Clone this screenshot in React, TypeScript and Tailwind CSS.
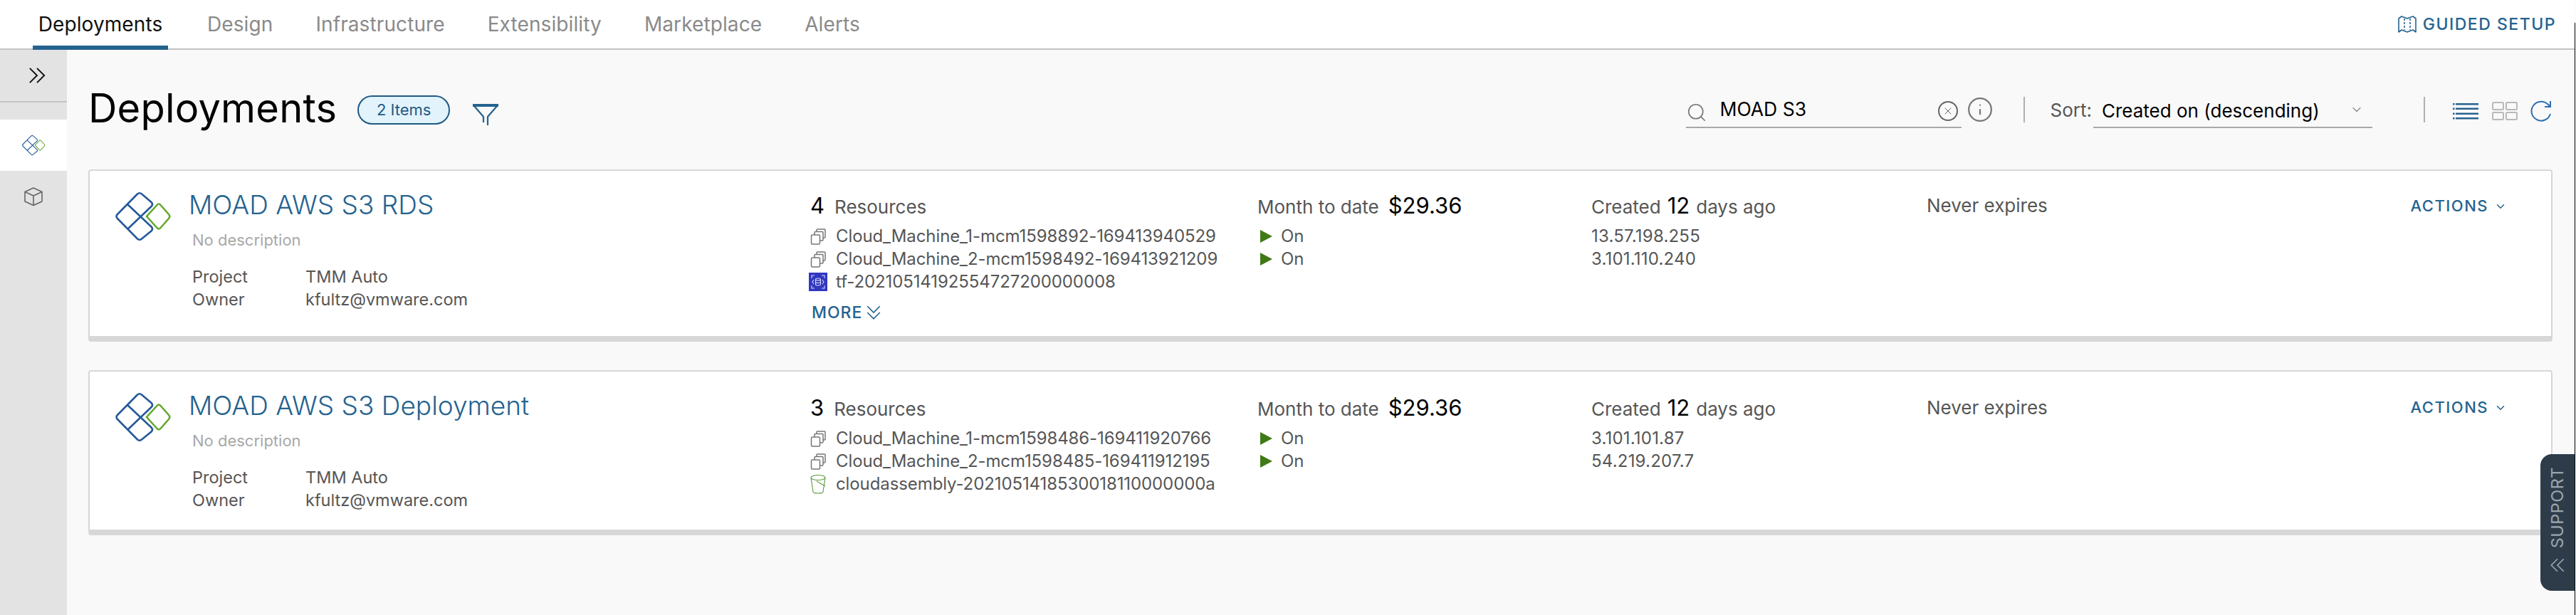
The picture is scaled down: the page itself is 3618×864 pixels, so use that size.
import { ChevronDown, Info, Search, X } from 'lucide-react';

const font = "font-['Inter','Liberation_Sans',sans-serif]";

// ─ Icons ───────────────────────────────────────
function DeployIcon({ className }: { className: string }) {
  return (
    <svg viewBox="-2 -2 81 72" fill="none" strokeWidth="2.6" className={className}>
      <path
        d="M31 2.5 Q34 0 37 2.5 L50.5 14 Q53.5 17 50.5 20 L17 52 M17 17 L50.5 48.5 Q53.5 51.5 50.5 54.5 L37 65.5 Q34 68 31 65.5 L3 37 Q0 34 3 31 L31 2.5"
        stroke="#25599c"
      />
      <path d="M58.5 18 Q61 15 63.5 18 L75 31 Q77.5 34 75 37 L63.5 50 Q61 53 58.5 50 L44 34 Z" stroke="#66a82e" />
    </svg>
  );
}

function CubeIcon() {
  return (
    <svg viewBox="0 0 28 28" fill="none" stroke="#666" strokeWidth="1.6" className="w-[28px] h-[28px]">
      <path d="M14 2 L26 7.5 V21 L14 26.5 L2 21 V7.5 Z M2 7.5 L14 13 L26 7.5 M14 13 V26.5" strokeLinejoin="round" />
    </svg>
  );
}

function DoubleChevron({ className, dir }: { className: string; dir: 'right' | 'down' | 'left' }) {
  const d =
    dir === 'right'
      ? 'M3 3 L11 11 L3 19 M11 3 L19 11 L11 19'
      : dir === 'down'
        ? 'M3 3 L11 11 L19 3 M3 11 L11 19 L19 11'
        : 'M11 3 L3 11 L11 19 M19 3 L11 11 L19 19';
  return (
    <svg viewBox="0 0 22 22" fill="none" stroke="currentColor" strokeWidth="1.5" className={className}>
      <path d={d} />
    </svg>
  );
}

function FilterIcon() {
  return (
    <svg viewBox="0 0 36 30" fill="none" stroke="#25638f" strokeWidth="2.2" className="w-[36px] h-[30px]">
      <path d="M0 2 H36" strokeWidth="4" />
      <path d="M2 3 L15 18 V26 M34 3 L21 18 V30" />
    </svg>
  );
}

function MachineIcon() {
  return (
    <svg viewBox="0 0 22 24" fill="none" stroke="#777" strokeWidth="1.5" className="w-[22px] h-[24px] shrink-0">
      <rect x="1.5" y="10" width="12" height="13" rx="1.5" />
      <path d="M6 10 V6.5 a1 1 0 0 1 1-1 H17 a1 1 0 0 1 1 1 V17 a1 1 0 0 1-1 1 H13.5" />
      <path d="M9 5.5 V3 a1 1 0 0 1 1-1 H20 a1 1 0 0 1 1 1 V13 a1 1 0 0 1-1 1 H18" />
    </svg>
  );
}

function ChipIcon() {
  return (
    <div className="w-[26px] h-[26px] bg-[#3237c0] flex items-center justify-center shrink-0 -ml-[2px] mr-[-2px]">
      <svg viewBox="0 0 22 22" fill="none" stroke="#d5d8f5" strokeWidth="1.1" className="w-[22px] h-[22px]">
        <path d="M2 6 V2 H6 M16 2 H20 V6 M2 16 V20 H6 M16 20 H20 V16" />
        <ellipse cx="11" cy="7.5" rx="3.5" ry="1.5" />
        <path d="M7.5 7.5 V14.5 a3.5 1.5 0 0 0 7 0 V7.5 M7.5 11 a3.5 1.5 0 0 0 7 0" />
        <path d="M5 8 L3 11 L5 14 M17 8 L19 11 L17 14" />
      </svg>
    </div>
  );
}

function BucketIcon() {
  return (
    <svg viewBox="0 0 24 28" fill="none" stroke="#5b9a3a" strokeWidth="1.1" className="w-[24px] h-[28px] shrink-0 -ml-[1px] -mr-[1px]">
      <ellipse cx="12" cy="5" rx="10" ry="3.5" />
      <path d="M2 5 L5 25 a7 2 0 0 0 14 0 L22 5 M10 10 L22 17" />
    </svg>
  );
}

function MapIcon() {
  return (
    <svg viewBox="0 0 28 26" fill="none" stroke="#25638f" strokeWidth="1.6" className="w-[28px] h-[26px]">
      <path d="M2 5 L6 2 L14 5 L22 2 L26 5 V24 L22 21 L14 24 L6 21 L2 24 Z" strokeLinejoin="round" />
      <path d="M10 5 V21 M18 5 V21" strokeDasharray="3 2" />
    </svg>
  );
}

function ListIcon() {
  return (
    <svg viewBox="0 0 36 24" className="w-[36px] h-[24px]" fill="#25638f">
      {[1, 7.5, 14.5, 21].map((y) => (
        <g key={y}>
          <rect x="0" y={y} width="2.5" height="2.5" />
          <rect x="4" y={y} width="32" height="2.5" />
        </g>
      ))}
    </svg>
  );
}

function GridIcon() {
  return (
    <svg viewBox="0 0 36 26" fill="none" stroke="#b9b9b9" strokeWidth="2" className="w-[36px] h-[26px]">
      <rect x="1" y="1" width="15" height="10" rx="1.5" />
      <rect x="20" y="1" width="15" height="10" rx="1.5" />
      <rect x="1" y="15" width="15" height="10" rx="1.5" />
      <rect x="20" y="15" width="15" height="10" rx="1.5" />
    </svg>
  );
}

function RefreshIcon() {
  return (
    <svg viewBox="0 0 32 30" fill="none" stroke="#2e6fae" strokeWidth="2" className="w-[32px] h-[30px]">
      <path d="M29 19 A13.5 13.5 0 1 1 26 6 L29 9 M29 1 V9 H21" />
    </svg>
  );
}

// ─ Data ────────────────────────────────────────
type Resource = { name: string; kind: 'machine' | 'chip' | 'bucket' };

type Deployment = {
  title: string;
  count: number;
  resources: Resource[];
  ips: string[];
  more?: boolean;
};

const deployments: Deployment[] = [
  {
    title: 'MOAD AWS S3 RDS',
    count: 4,
    resources: [
      { name: 'Cloud_Machine_1-mcm1598892-169413940529', kind: 'machine' },
      { name: 'Cloud_Machine_2-mcm1598492-169413921209', kind: 'machine' },
      { name: 'tf-20210514192554727200000008', kind: 'chip' },
    ],
    ips: ['13.57.198.255', '3.101.110.240'],
    more: true,
  },
  {
    title: 'MOAD AWS S3 Deployment',
    count: 3,
    resources: [
      { name: 'Cloud_Machine_1-mcm1598486-169411920766', kind: 'machine' },
      { name: 'Cloud_Machine_2-mcm1598485-169411912195', kind: 'machine' },
      { name: 'cloudassembly-2021051418530018110000000a', kind: 'bucket' },
    ],
    ips: ['3.101.101.87', '54.219.207.7'],
  },
];

const tabs = ['Design', 'Infrastructure', 'Extensibility', 'Marketplace', 'Alerts'];

// ─ Card ────────────────────────────────────────
function DeploymentCard({ d }: { d: Deployment }) {
  const colTop = d.more ? 'pt-[1px]' : 'pt-[3px]';
  return (
    <div className={`flex bg-white border-2 border-[#d7d7d7] border-b-[8px] rounded-[4px] pt-[26px] ${d.more ? 'h-[242px]' : 'h-[232px]'}`}>
      <div className="w-[1012px] shrink-0 flex pl-[34px]">
        <DeployIcon className="w-[81px] h-[72px] shrink-0 mt-[2px]" />
        <div className="pl-[24px]">
          <div className="text-[#25638f] text-[37px] leading-[44px] font-light">{d.title}</div>
          <div className="text-[#a8a8a8] text-[22px] leading-[28px] mt-[13px] pl-[5px]">No description</div>
          <div className="grid grid-cols-[159px_1fr] text-[#565656] text-[23.5px] leading-[32px] mt-[22px] pl-[5px]">
            <span>Project</span>
            <span>TMM Auto</span>
            <span>Owner</span>
            <span>kfultz@vmware.com</span>
          </div>
        </div>
      </div>

      <div className={`w-[628px] shrink-0 ${colTop}`}>
        <div className="flex items-baseline gap-[14px] leading-[44px]">
          <span className="text-[31px] text-black">{d.count}</span>
          <span className="text-[#565656] text-[26px]">Resources</span>
        </div>
        <div className="mt-[3px] flex flex-col">
          {d.resources.map((r) => (
            <div key={r.name} className="flex items-center gap-[14px] h-[32px] text-[#565656] text-[24px]">
              {r.kind === 'machine' && <MachineIcon />}
              {r.kind === 'chip' && <ChipIcon />}
              {r.kind === 'bucket' && <BucketIcon />}
              <span className="whitespace-nowrap tracking-[-0.1px]">{r.name}</span>
            </div>
          ))}
        </div>
        {d.more && (
          <div className="flex items-center gap-[4px] text-[#25638f] text-[23px] font-medium mt-[10px] pl-[2px] tracking-[1px]">
            MORE
            <DoubleChevron dir="down" className="w-[24px] h-[24px]" />
          </div>
        )}
      </div>

      <div className={`w-[469px] shrink-0 ${colTop}`}>
        <div className="flex items-baseline gap-[13px] leading-[44px]">
          <span className="text-[#565656] text-[26px]">Month to date</span>
          <span className="text-[31px] text-black">$29.36</span>
        </div>
        <div className="mt-[3px] flex flex-col">
          {d.ips.map((ip) => (
            <div key={ip} className="flex items-center gap-[12px] h-[32px] text-[#565656] text-[24px] pl-[4px]">
              <span className="w-0 h-0 border-y-[9px] border-y-transparent border-l-[17px] border-l-[#3f7a16]" />
              On
            </div>
          ))}
        </div>
      </div>

      <div className={`w-[471px] shrink-0 ${colTop}`}>
        <div className="flex items-baseline gap-[9px] leading-[44px] text-[#565656] text-[26px]">
          Created
          <span className="text-[31px] text-black">12</span>
          days ago
        </div>
        <div className="mt-[3px] flex flex-col">
          {d.ips.map((ip) => (
            <div key={ip} className="flex items-center h-[32px] text-[#565656] text-[24px] tracking-[0.2px]">
              {ip}
            </div>
          ))}
        </div>
      </div>

      <div className={`flex-1 text-[#565656] text-[26px] leading-[44px] ${colTop}`}>Never expires</div>

      <div className={`shrink-0 pr-[62px] flex items-center h-[46px] gap-[8px] text-[#25638f] text-[22px] font-medium tracking-[1.5px] ${colTop}`}>
        ACTIONS
        <ChevronDown className="w-[18px] h-[18px]" strokeWidth={2} />
      </div>
    </div>
  );
}

// ─ App ─────────────────────────────────────────
export default function App() {
  return (
    <div className={`${font} h-[864px] w-[3617px] overflow-hidden flex flex-col bg-[#f9f9f9] relative pr-[1px]`}>
      {/* Top tabs */}
      <div className="h-[70px] shrink-0 bg-white border-b-2 border-[#c4c4c4] flex items-start pl-[46px] pr-[26px]">
        <div className="h-[70px] w-[190px] justify-center flex items-center border-b-[6px] border-[#25638f] text-[#111] text-[28px] tracking-[0.1px] pt-[4px]">
          Deployments
        </div>
        <div className="flex h-[68px] items-center gap-[60px] pl-[55px] text-[#8a8a8a] text-[28px] tracking-[0.1px]">
          {tabs.map((t) => (
            <span key={t}>{t}</span>
          ))}
        </div>
        <div className="ml-auto h-[68px] flex items-center gap-[8px] text-[#25638f] text-[23px] font-medium tracking-[1.5px]">
          <MapIcon />
          GUIDED SETUP
        </div>
      </div>

      <div className="flex flex-1 min-h-0">
        {/* Side rail */}
        <div className="w-[94px] shrink-0 bg-[#e3e3e3] flex flex-col">
          <div className="h-[74px] border-b-2 border-[#c4c4c4] flex items-center justify-center pl-[10px] text-[#111]">
            <DoubleChevron dir="right" className="w-[28px] h-[28px]" />
          </div>
          <div className="mt-[24px] h-[72px] bg-white flex items-center justify-center">
            <DeployIcon className="w-[34px] h-[30px]" />
          </div>
          <div className="h-[72px] flex items-center justify-center">
            <CubeIcon />
          </div>
        </div>

        {/* Main */}
        <div className="flex-1 pl-[30px] pr-[31px]">
          <div className="h-[168px] flex items-start pt-[46px]">
            <h1 className="text-[56px] leading-[68px] text-black tracking-[0.2px] mt-[2px]">Deployments</h1>
            <div className="ml-[29px] mt-[18px] w-[130px] h-[41px] rounded-full border-2 border-[#1f5a85] bg-[#e3f3fb] flex items-center justify-center text-[#1f5a85] text-[22px]">
              2 Items
            </div>
            <div className="ml-[32px] mt-[30px]">
              <FilterIcon />
            </div>

            <div className="ml-auto flex items-start">
              <div className="relative w-[387px] h-[46px] mt-[18px] border-b-2 border-[#a8a8a8] text-black text-[26.5px] leading-[39px]">
                <Search className="w-[30px] h-[30px] text-[#777] absolute left-0 top-[9px]" strokeWidth={1.3} />
                <span className="pl-[48px]">MOAD S3</span>
                <span className="absolute right-[5px] top-[8px] w-[28px] h-[28px] rounded-full border-2 border-[#666] flex items-center justify-center">
                  <X className="w-[16px] h-[16px] text-[#666]" strokeWidth={1.5} />
                </span>
              </div>
              <Info className="ml-[7px] mt-[19px] w-[38px] h-[38px] text-[#777]" strokeWidth={1.4} />
              <div className="ml-[42px] mt-[20px] w-[2px] h-[36px] bg-[#b0b0b0]" />
              <span className="ml-[36px] mt-[21px] text-[#565656] text-[26px] leading-[36px]">Sort:</span>
              <div className="relative ml-[2px] w-[392px] h-[46px] mt-[18px] border-b-2 border-[#a8a8a8] pl-[12px] text-black text-[26px] leading-[44px] whitespace-nowrap">
                Created on (descending)
                <ChevronDown className="absolute right-[12px] top-[10px] w-[20px] h-[20px] text-[#888]" strokeWidth={1.5} />
              </div>
              <div className="ml-[72px] mt-[20px] w-[2px] h-[36px] bg-[#b0b0b0]" />
              <div className="ml-[39px] mt-[28px]"><ListIcon /></div>
              <div className="ml-[19px] mt-[27px]"><GridIcon /></div>
              <div className="ml-[17px] mt-[25px]"><RefreshIcon /></div>
            </div>
          </div>

          <div className="flex flex-col gap-[40px]">
            {deployments.map((d) => (
              <DeploymentCard key={d.title} d={d} />
            ))}
          </div>
        </div>
      </div>

      {/* Window edge */}
      <div className="absolute right-0 top-[32px] bottom-0 w-[1px] bg-black" />

      {/* Support tab */}
      <div className="absolute right-[1px] top-[638px] w-[48px] h-[192px] bg-[#2e3c4a] rounded-l-[16px] flex flex-col items-center justify-end pb-[24px] gap-[12px] text-[#9aa5ae]">
        <span className="[writing-mode:vertical-rl] rotate-180 text-[23.5px] tracking-[0.5px]">SUPPORT</span>
        <DoubleChevron dir="left" className="w-[24px] h-[24px]" />
      </div>
    </div>
  );
}
